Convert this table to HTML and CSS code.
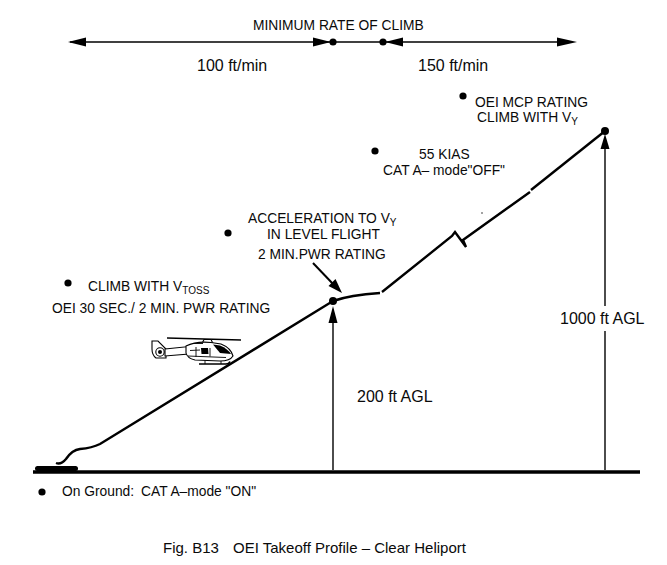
FILE: index.html
```html
<!DOCTYPE html>
<html>
<head>
<meta charset="utf-8">
<link rel="stylesheet" href="styles.css">
<title>OEI Takeoff Profile</title>
</head>
<body>
<svg class="fig" width="667" height="565" viewBox="0 0 667 565" xmlns="http://www.w3.org/2000/svg">
  <!-- top rate of climb scale -->
  <text class="lbl" x="253" y="30">MINIMUM RATE OF CLIMB</text>
  <line class="thin" x1="70" y1="42" x2="570" y2="42"/>
  <polygon class="solid" points="68,42 86,37.5 86,46.5"/>
  <polygon class="solid" points="313,37.5 331,42 313,46.5"/>
  <circle class="solid" cx="333" cy="42" r="3.6"/>
  <circle class="solid" cx="383" cy="42" r="3.6"/>
  <polygon class="solid" points="385,42 403,37.5 403,46.5"/>
  <polygon class="solid" points="557,37.5 577,42 557,46.5"/>
  <text class="lbl big" x="197" y="71">100 ft/min</text>
  <text class="lbl big" x="418" y="71">150 ft/min</text>

  <!-- labels -->
  <circle class="solid" cx="463" cy="96" r="3.6"/>
  <text class="lbl" x="475" y="107">OEI MCP RATING</text>
  <text class="lbl" x="477" y="122">CLIMB WITH V<tspan class="sub" dy="3">Y</tspan></text>

  <circle class="solid" cx="375" cy="151" r="3.6"/>
  <text class="lbl" x="419" y="159">55 KIAS</text>
  <text class="lbl" x="383" y="175">CAT A– mode"OFF"</text>

  <circle class="solid" cx="228" cy="233" r="3.6"/>
  <text class="lbl" x="248" y="223">ACCELERATION TO V<tspan class="sub" dy="3">Y</tspan></text>
  <text class="lbl" x="267" y="239">IN LEVEL FLIGHT</text>
  <text class="lbl" x="258" y="259">2 MIN.PWR RATING</text>

  <circle class="solid" cx="68" cy="283" r="3.6"/>
  <text class="lbl" x="88" y="291">CLIMB WITH V<tspan class="sub" dy="3">TOSS</tspan></text>
  <text class="lbl" x="52" y="313">OEI 30 SEC./ 2 MIN. PWR RATING</text>

  <text class="lbl big" x="357" y="402">200 ft AGL</text>
  <text class="lbl big" x="560" y="324">1000 ft AGL</text>

  <circle class="solid" cx="42" cy="492" r="3.6"/>
  <text class="lbl" x="62" y="496">On Ground:<tspan x="141">CAT A–mode "ON"</tspan></text>

  <text class="lbl cap" x="163" y="553">Fig. B13<tspan x="233">OEI Takeoff Profile – Clear Heliport</tspan></text>

  <!-- ground -->
  <line class="ground" x1="33" y1="472" x2="640" y2="472"/>
  <rect class="solid" x="35" y="466" width="43" height="5" rx="2.5"/>

  <!-- vertical height arrows -->
  <line class="thin" x1="333" y1="470" x2="333" y2="318"/>
  <polygon class="solid" points="333,306 328.5,323 337.5,323"/>
  <line class="thin" x1="605" y1="470" x2="605" y2="331"/>
  <line class="thin" x1="605" y1="306" x2="605" y2="145"/>
  <polygon class="solid" points="605,134 600.5,149 609.5,149"/>

  <!-- flight path -->
  <path class="flight" d="M56,463 Q61,465 66,459 Q72,450 80,449 Q92,448 100,444 L333,301"/>
  <path class="flight" d="M333,301 Q350,295 380,293"/>
  <path class="flight" d="M382,292 L452,236 L455,232 L466,247 L463,240 L530,192"/>
  <path class="flight" d="M531,190 L605,131"/>
  <circle class="solid" cx="333" cy="301" r="4"/>
  <circle class="solid" cx="605" cy="131" r="4"/>
  <circle class="solid" cx="482" cy="213" r="0.7"/>

  <!-- pointer arrow to level-flight point -->
  <line class="mid" x1="313" y1="263" x2="334" y2="285"/>
  <polygon class="solid" points="342,293 328.5,286 335.5,279"/>

  <!-- helicopter -->
  <g class="heli">
    <line class="rotor" x1="167" y1="338" x2="241" y2="340"/>
    <path class="hbody" d="M202,343.5 L204,339.5 L211,339.5 L213,343.5 Z"/>
    <path class="hbody" d="M152,341 L158,341 L166,349 L166,358 L156,358 Q152,355 152,349 Z"/>
    <circle class="hbody" cx="160" cy="352" r="4.2"/>
    <circle class="solid" cx="160" cy="352" r="2"/>
    <path class="hbody" d="M165,349 L189,346.5 L189,354 L165,356 Z"/>
    <path class="hbody" d="M186,346 Q196,341 211,342.5 L221,344 Q231,348 233,356 Q230,361 220,361 L195,360 Q187,358 186,353 Z"/>
    <path class="solid" d="M213,344.5 L220,345.5 Q228,349 231,354 L220,353 Z"/>
    <path class="solid" d="M201,348 L208,348 L208.5,354 L201.5,354 Z"/>
    <path class="hline" d="M190,350.5 L200,350 M196,347 L196,357 M210,356.5 L210,348 M188,356 L226,357.5"/>
    <path class="hline" d="M194,343.5 L203,343.5"/>
    <path class="hline" d="M205,360.5 L205,364 M221,361 L221,364"/>
    <path class="skid" d="M199,364 L226,364 Q229,364 230,361.5"/>
  </g>
</svg>
</body>
</html>
```
FILE: styles.css
```css
html, body {
  margin: 0;
  padding: 0;
  background: #ffffff;
}

.fig {
  display: block;
}

.lbl {
  font-family: "Liberation Sans", Arial, sans-serif;
  font-size: 13.8px;
  fill: #0a0a0a;
}

.big {
  font-size: 16px;
}

.cap {
  font-size: 15px;
}

.sub {
  font-size: 10px;
}

.solid {
  fill: #000000;
  stroke: none;
}

.thin {
  stroke: #000000;
  stroke-width: 1.4;
}

.mid {
  stroke: #000000;
  stroke-width: 2;
}

.ground {
  stroke: #000000;
  stroke-width: 3.6;
}

.flight {
  fill: none;
  stroke: #000000;
  stroke-width: 2.4;
  stroke-linejoin: miter;
}

.rotor {
  stroke: #000000;
  stroke-width: 1.3;
}

.hbody {
  fill: #ffffff;
  stroke: #000000;
  stroke-width: 1.1;
}

.hline {
  fill: none;
  stroke: #000000;
  stroke-width: 0.9;
}

.skid {
  fill: none;
  stroke: #000000;
  stroke-width: 1.6;
}
```
